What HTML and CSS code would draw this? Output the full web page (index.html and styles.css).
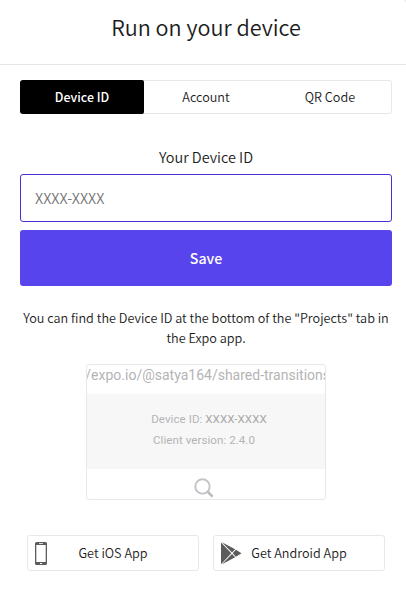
FILE: index.html
```html
<!DOCTYPE html>
<html lang="en">
<head>
<meta charset="utf-8">
<title>Run on your device</title>
<link rel="stylesheet" href="styles.css">
</head>
<body>
<main class="modal">
  <h1 class="title"><span>Run on your device</span></h1>
  <div class="content">
    <nav class="tabs">
      <button class="tab active">Device ID</button>
      <button class="tab">Account</button>
      <button class="tab">QR Code</button>
    </nav>
    <label class="label" for="device">Your Device ID</label>
    <input class="input" id="device" type="text" placeholder="XXXX-XXXX">
    <button class="save">Save</button>
    <p class="help">You can find the Device ID at the bottom of the "Projects" tab in<br>the Expo app.</p>
    <div class="preview">
      <div class="url"><span>//expo.io/@satya164/shared-transitions</span></div>
      <div class="info">
        <div class="device-id">Device ID: <b>XXXX-XXXX</b></div>
        <div class="version">Client version: 2.4.0</div>
      </div>
      <svg class="search" width="20" height="20" viewBox="0 0 20 20"><circle cx="8.500" cy="8.500" r="7.200" fill="none" stroke="#c4c5c9" stroke-width="2"/><path d="M13.400 13.400L18.600 18.600" stroke="#b9babd" stroke-width="2.600"/></svg>
    </div>
    <div class="stores">
      <a class="store"><svg class="phone" width="12" height="23" viewBox="0 0 12 23"><path fill="#5c5c5c" fill-rule="evenodd" d="M1.500 0h9Q12 0 12 1.500v20q0 1.500-1.500 1.500h-9Q0 23 0 21.500v-20Q0 0 1.500 0zM1.300 3v17h9.400V3zM4 1.200v.8h4v-.8zM5 20.900v1.100h2v-1.100z"/></svg><span>Get iOS App</span></a>
      <a class="store"><svg class="play" width="21" height="23" viewBox="0 0 21 23"><path fill="#5c5c5c" d="M0 .5L10.300 11.200 0 22.200zM.9 .3L14.200 7.200 11 10.500zM14.900 7.700L20.500 11.200 14.900 14.700 11.700 11.200zM.9 22.300L11 11.900 14.200 15.200z"/></svg><span>Get Android App</span></a>
    </div>
  </div>
</main>
</body>
</html>
```
FILE: styles.css
```css
* { box-sizing: border-box; }
body {
  margin: 0;
  background: #e9e9e9;
  color: #1c1c1c;
  font-family: "Noto Sans CJK JP", "Noto Sans", sans-serif;
  font-size: 12.650px;
  font-weight: 350;
}
button, input { font: inherit; color: inherit; }
.modal {
  width: 406px;
  height: 591px;
  border-top-right-radius: 4px;
  background: #fff;
  overflow: hidden;
}
.title {
  height: 65px;
  margin: 0;
  padding: 11px 0 0 6px;
  border-bottom: 1px solid #e6e6e6;
  font-size: 21.600px;
  font-weight: 350;
  line-height: 32px;
  text-align: center;
}
.content { display: flex; flex-direction: column; padding: 15px 14px 0 20px; }
.tabs {
  display: grid;
  grid-template-columns: repeat(3, 1fr);
  height: 34px;
  border-radius: 3px;
  box-shadow: inset 0 0 0 1px #e8e8e8;
}
.tab { padding: 0 0 2px; border: 0; background: none; }
.tab.active {
  padding-bottom: 0;
  border-radius: 3px 2px 2px 3px;
  background: #000;
  color: #fff;
  font-size: 12.400px;
  font-weight: 500;
}
.label { height: 20px; margin-top: 33px; font-size: 14.450px; line-height: 20px; text-align: center; }
.input {
  height: 48px;
  margin-top: 7px;
  padding: 0 14px 2px;
  border: 1px solid #4630d8;
  border-radius: 3px;
  outline: 0;
  background: #fff;
  font-size: 14.500px;
}
.input::placeholder { color: #757575; }
.save {
  height: 56px;
  margin-top: 8px;
  padding: 0;
  border: 0;
  border-radius: 3px;
  background: #5844ed;
  color: #fff;
  font-size: 14.200px;
  font-weight: 500;
}
.help { height: 40px; margin: 22px -10px 0; line-height: 20px; text-align: center; white-space: nowrap; }
.preview {
  display: flex;
  flex-direction: column;
  align-items: center;
  width: 240px;
  height: 136px;
  margin: 16px auto 0;
  border: 1px solid #e8e8e8;
  border-radius: 3px;
  overflow: hidden;
  color: #b4b4b6;
  font-family: Roboto, sans-serif;
  font-weight: 400;
}
.url {
  display: flex;
  justify-content: flex-end;
  width: 100%;
  height: 29px;
  overflow: hidden;
  font-size: 14px;
  line-height: 21px;
  white-space: nowrap;
}
.url span { margin-right: -5px; }
.info {
  width: 100%;
  height: 75px;
  padding-top: 15px;
  background: #f7f7f7;
  font-size: 11.600px;
  letter-spacing: .04px;
  line-height: 21px;
  text-align: center;
}
.info b { color: #a9a9a9; font-weight: 400; }
.device-id { padding-left: 6px; }
.version { padding-right: 4px; }
.search { margin: 9px 4px 0 0; flex-shrink: 0; }
.stores { display: flex; justify-content: center; gap: 14px; margin-top: 35px; }
.store {
  display: grid;
  grid-template-columns: 1fr;
  align-items: center;
  width: 172px;
  height: 36px;
  padding: 0 7px;
  border: 1px solid #e8e8e8;
  border-radius: 3px;
}
.store svg, .store span { grid-area: 1 / 1; }
.store span { padding-bottom: 2px; text-align: center; }
```
